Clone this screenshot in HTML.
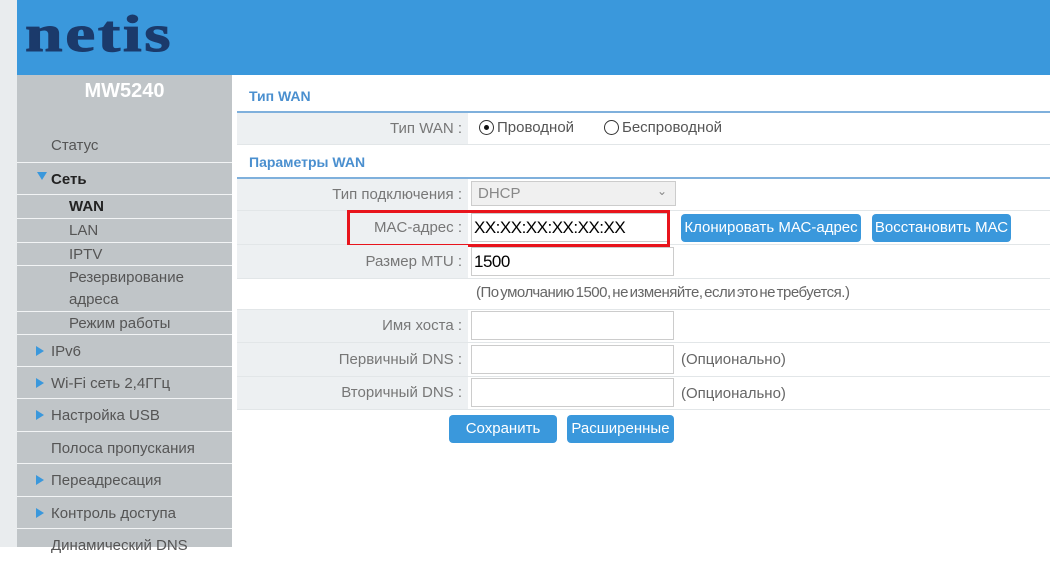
<!DOCTYPE html>
<html><head><meta charset="utf-8"><style>
*{margin:0;padding:0;box-sizing:border-box}
body{width:1050px;height:547px;overflow:hidden;background:#fff;font-family:"Liberation Sans",Arial,sans-serif;position:relative}
.a{position:absolute}
#strip{left:0;top:0;width:17px;height:547px;background:#e9ecee}
#hdr{left:17px;top:0;width:1033px;height:75px;background:#3a98dc}
#logo{left:25px;top:9px;font-family:"Liberation Serif",serif;font-weight:bold;font-size:52px;line-height:52px;color:#1b3a6b;letter-spacing:2px;transform:scaleX(1.3);transform-origin:0 0;-webkit-text-stroke:1px #1b3a6b}
#side{left:17px;top:75px;width:215px;height:472px;background:#c0c5c8}
.si{position:absolute;left:17px;width:215px;border-top:1px solid #f2f4f5;font-size:15px;color:#555;}
.si span{position:absolute}
.tri{position:absolute;left:19px;width:0;height:0;border-top:5px solid transparent;border-bottom:5px solid transparent;border-left:8px solid #3a98dc}
.row{position:absolute;left:237px;width:813px;border-bottom:1px solid #e2e6e8}
.lab{position:absolute;left:237px;width:231px;background:#edf0f2;text-align:right;font-size:15px;color:#777;padding-right:6px}
.inp{position:absolute;left:471px;width:203px;height:29px;border:1px solid #ccc;background:#fff;font-size:17px;color:#000;padding:3px 2px;line-height:22px;letter-spacing:-0.5px}
.btn{position:absolute;background:#3a98dc;color:#fff;font-size:15px;border-radius:4px;text-align:center;line-height:28px;height:28px}
.opt{position:absolute;left:681px;font-size:15px;color:#666}
.sec{position:absolute;left:249px;font-size:14px;font-weight:bold;color:#4a8fcf}
</style></head><body>
<div class="a" id="strip"></div>
<div class="a" id="hdr"></div>
<div class="a" id="logo">netis</div>
<div class="a" id="side"></div>
<div class="a" style="left:17px;top:80px;width:215px;text-align:center;font-weight:bold;font-size:20px;color:#fff">MW5240</div>

<div class="si" style="top:130px;height:33px;border-top:none"><span style="left:34px;top:7px">Статус</span></div>
<div class="si" style="top:162px;height:33px"><div class="tri" style="left:20px;top:9px;border-left:5px solid transparent;border-right:5px solid transparent;border-top:8px solid #3a98dc;border-bottom:none"></div><span style="left:34px;top:8px;font-weight:bold;color:#222">Сеть</span></div>
<div class="si" style="top:194px;height:24px"><span style="left:52px;top:3px;font-weight:bold;color:#222">WAN</span></div>
<div class="si" style="top:218px;height:24px"><span style="left:52px;top:3px">LAN</span></div>
<div class="si" style="top:242px;height:24px"><span style="left:52px;top:3px">IPTV</span></div>
<div class="si" style="top:265px;height:46px"><span style="left:52px;top:1px;line-height:22px">Резервирование<br>адреса</span></div>
<div class="si" style="top:311px;height:24px"><span style="left:52px;top:3px">Режим работы</span></div>
<div class="si" style="top:334px;height:33px"><div class="tri" style="top:11px"></div><span style="left:34px;top:8px">IPv6</span></div>
<div class="si" style="top:366px;height:33px"><div class="tri" style="top:11px"></div><span style="left:34px;top:8px">Wi-Fi сеть 2,4ГГц</span></div>
<div class="si" style="top:398px;height:33px"><div class="tri" style="top:11px"></div><span style="left:34px;top:8px">Настройка USB</span></div>
<div class="si" style="top:431px;height:33px"><span style="left:34px;top:8px">Полоса пропускания</span></div>
<div class="si" style="top:463px;height:33px"><div class="tri" style="top:11px"></div><span style="left:34px;top:8px">Переадресация</span></div>
<div class="si" style="top:496px;height:33px"><div class="tri" style="top:11px"></div><span style="left:34px;top:8px">Контроль доступа</span></div>
<div class="si" style="top:528px;height:33px"><span style="left:34px;top:8px">Динамический DNS</span></div>

<div class="sec" style="top:88px">Тип WAN</div>
<div class="a" style="left:237px;top:111px;width:813px;height:2px;background:#7fb0dc"></div>
<div class="row" style="top:113px;height:32px"></div>
<div class="lab" style="top:113px;height:31px;line-height:31px">Тип WAN :</div>
<div class="a" style="left:479px;top:120px;width:15px;height:15px;border:1.5px solid #333;border-radius:50%"></div>
<div class="a" style="left:484px;top:125px;width:5px;height:5px;background:#111;border-radius:50%"></div>
<div class="a" style="left:497px;top:119px;font-size:15px;color:#555">Проводной</div>
<div class="a" style="left:604px;top:120px;width:15px;height:15px;border:1.5px solid #333;border-radius:50%"></div>
<div class="a" style="left:622px;top:119px;font-size:15px;color:#555">Беспроводной</div>

<div class="sec" style="top:154px">Параметры WAN</div>
<div class="a" style="left:237px;top:177px;width:813px;height:2px;background:#7fb0dc"></div>

<div class="row" style="top:179px;height:32px"></div>
<div class="lab" style="top:179px;height:31px;line-height:31px">Тип подключения :</div>
<div class="a" style="left:471px;top:181px;width:205px;height:25px;border:1px solid #ccc;background:#f0f0f0;font-size:15px;color:#888;padding:3px 6px">DHCP<span style="position:absolute;right:8px;top:2px;font-size:12px">&#8964;</span></div>

<div class="row" style="top:211px;height:34px"></div>
<div class="lab" style="top:211px;height:33px;line-height:33px">MAC-адрес :</div>
<div class="inp" style="top:213px;width:198px;height:29px">XX:XX:XX:XX:XX:XX</div>
<div class="a" style="left:347px;top:210px;width:323px;height:37px;border:3px solid #e8141c"></div>
<div class="btn" style="left:681px;top:214px;width:180px">Клонировать МАС-адрес</div>
<div class="btn" style="left:872px;top:214px;width:139px">Восстановить МАС</div>

<div class="row" style="top:245px;height:34px"></div>
<div class="lab" style="top:245px;height:33px;line-height:33px">Размер MTU :</div>
<div class="inp" style="top:247px">1500</div>

<div class="row" style="top:279px;height:31px"></div>
<div class="a" style="left:476px;top:284px;font-size:15px;color:#666;letter-spacing:-0.5px;word-spacing:-2px">(По умолчанию 1500, не изменяйте, если это не требуется.)</div>

<div class="row" style="top:310px;height:33px"></div>
<div class="lab" style="top:310px;height:32px;line-height:32px">Имя хоста :</div>
<div class="inp" style="top:311px"></div>

<div class="row" style="top:343px;height:34px"></div>
<div class="lab" style="top:343px;height:33px;line-height:33px">Первичный DNS :</div>
<div class="inp" style="top:345px"></div>
<div class="opt" style="top:351px">(Опционально)</div>

<div class="row" style="top:377px;height:33px"></div>
<div class="lab" style="top:377px;height:32px;line-height:32px">Вторичный DNS :</div>
<div class="inp" style="top:378px"></div>
<div class="opt" style="top:385px">(Опционально)</div>

<div class="btn" style="left:449px;top:415px;width:108px">Сохранить</div>
<div class="btn" style="left:567px;top:415px;width:107px">Расширенные</div>
</body></html>
